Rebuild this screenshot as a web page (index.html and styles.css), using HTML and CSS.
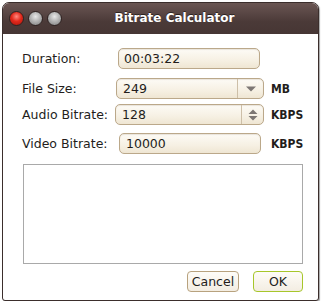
FILE: index.html
```html
<!DOCTYPE html>
<html>
<head>
<meta charset="utf-8">
<link rel="stylesheet" href="styles.css">
</head>
<body>
<div class="window">
  <div class="titlebar">
    <div class="lights">
      <span class="light red"></span>
      <span class="light gray"></span>
      <span class="light gray"></span>
    </div>
    <div class="title">Bitrate Calculator</div>
  </div>
  <div class="content">
    <div class="row r-duration">
      <span class="label">Duration:</span>
      <div class="field f-duration">00:03:22</div>
    </div>
    <div class="row r-size">
      <span class="label">File Size:</span>
      <div class="field combo f-size">
        <span class="val">249</span>
        <span class="btn"><svg width="12" height="8" viewBox="0 0 12 8"><path d="M1 1.5 L11 1.5 L6 6.5 Z" fill="#7d7774"/></svg></span>
      </div>
      <span class="unit">MB</span>
    </div>
    <div class="row r-audio">
      <span class="label">Audio Bitrate:</span>
      <div class="field combo f-audio">
        <span class="val">128</span>
        <span class="btn"><svg width="12" height="14" viewBox="0 0 12 14"><path d="M1.5 6 L10.5 6 L6 1.5 Z M1.5 8 L10.5 8 L6 12.5 Z" fill="#7d7774"/></svg></span>
      </div>
      <span class="unit">KBPS</span>
    </div>
    <div class="row r-video">
      <span class="label">Video Bitrate:</span>
      <div class="field f-video">10000</div>
      <span class="unit">KBPS</span>
    </div>
    <div class="textarea"></div>
    <div class="buttons">
      <button class="button cancel">Cancel</button>
      <button class="button ok">OK</button>
    </div>
  </div>
</div>
</body>
</html>
```
FILE: styles.css
```css
html, body {
  margin: 0;
  padding: 0;
  background: #ffffff;
}
body {
  font-family: "DejaVu Sans", "Liberation Sans", sans-serif;
  font-size: 12.5px;
  color: #231d1b;
}
.window {
  box-sizing: border-box;
  margin: 2px 0 0 2px;
  width: 317px;
  height: 299px;
  border: 1px solid #3b2e2c;
  border-radius: 7px 7px 3px 3px;
  overflow: hidden;
  background: #ffffff;
  box-shadow: 1px 1px 1px rgba(0,0,0,0.35);
}
.titlebar {
  height: 31px;
  background: linear-gradient(#6a5653, #4b3a38 60%, #463634);
  display: flex;
  align-items: center;
  position: relative;
}
.lights {
  display: flex;
  gap: 4px;
  padding-left: 6px;
}
.light {
  width: 15px;
  height: 15px;
  border-radius: 50%;
  box-sizing: border-box;
  border: 1px solid #2f2322;
}
.light.red {
  background: radial-gradient(circle at 50% 35%, #ff8a80 0%, #e2291c 45%, #a8150c 100%);
}
.light.gray {
  background: radial-gradient(circle at 50% 35%, #e8e8e8 0%, #b4b4b4 45%, #7c7c7c 100%);
}
.title {
  position: absolute;
  left: 28px;
  right: 0;
  text-align: center;
  color: #ffffff;
  font-weight: bold;
  font-size: 12px;
  text-shadow: 0 -1px 0 rgba(0,0,0,0.5);
  top: 8px;
}
.content {
  padding: 0 0 0 18px;
}
.row {
  display: flex;
  align-items: center;
  position: relative;
  height: 21px;
}
.r-duration { margin-top: 14px; }
.r-size { margin-top: 9px; }
.r-audio { margin-top: 5px; }
.r-video { margin-top: 8px; }
.label {
  width: 92px;
  flex: none;
  padding-left: 1px;
}
.field {
  box-sizing: border-box;
  height: 21px;
  border: 1px solid #bba88a;
  border-radius: 5px;
  background: linear-gradient(#fdfbf6, #f6f0e3 60%, #efe6d3);
  padding-left: 6px;
  display: flex;
  align-items: center;
  box-shadow: inset 0 1px 1px rgba(120,100,70,0.15);
}
.f-duration { margin-left: 4px; width: 142px; padding-left: 5px; }
.f-size { margin-left: 2px; width: 148px; }
.f-audio { margin-left: 1px; width: 149px; }
.f-video { margin-left: 5px; width: 142px; padding-left: 6px; }
.combo { padding-right: 0; }
.combo .val { flex: 1; }
.combo .btn {
  width: 25px;
  height: 100%;
  border-left: 1px solid #cdbfa8;
  display: flex;
  align-items: center;
  justify-content: center;
}
.f-audio .btn { width: 21px; }
.unit {
  position: absolute;
  left: 250px;
  font-family: "DejaVu Sans Condensed", "DejaVu Sans", sans-serif;
  font-weight: bold;
  font-size: 12px;
  color: #231d1b;
}
.textarea {
  box-sizing: border-box;
  margin-top: 10px;
  margin-left: 2px;
  width: 280px;
  height: 100px;
  border: 1px solid #a9a9a9;
}
.buttons {
  display: flex;
  justify-content: flex-end;
  gap: 14px;
  width: 282px;
  margin-top: 7px;
}
.button {
  box-sizing: border-box;
  height: 21px;
  font-family: inherit;
  font-size: 12.5px;
  color: #231d1b;
  border-radius: 4px;
  background: linear-gradient(#fefcf8, #f3ede2);
  padding: 0;
}
.cancel {
  width: 52px;
  border: 1px solid #b8a27e;
}
.ok {
  width: 50px;
  border: 1.5px solid #a7c62b;
}
```
